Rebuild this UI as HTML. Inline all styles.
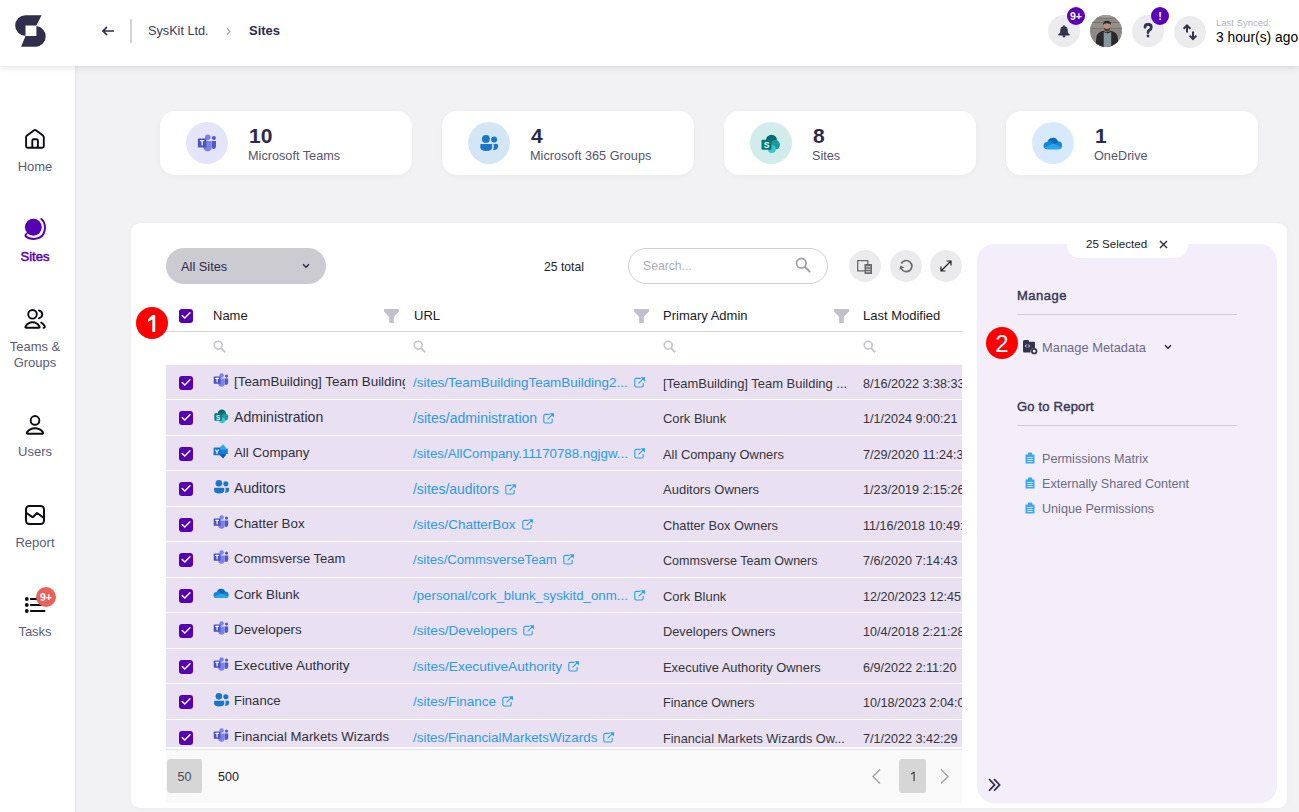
<!DOCTYPE html>
<html><head><meta charset="utf-8">
<style>
*{box-sizing:border-box;margin:0;padding:0}
html,body{width:1299px;height:812px;overflow:hidden}
body{background:#f2f2f5;font-family:"Liberation Sans",sans-serif;position:relative;color:#2b2a4a}
.abs{position:absolute}
#hdr{position:absolute;left:0;top:0;width:1299px;height:66px;background:#fff;box-shadow:0 1px 7px rgba(0,0,0,.13);z-index:5}
#side{position:absolute;left:0;top:66px;width:75px;height:746px;background:#fff;box-shadow:1px 0 2px rgba(0,0,0,.06);z-index:4}
.nav{position:absolute;left:0;width:70px;text-align:center;font-size:13px;color:#5b5b78;line-height:16px}
.nav svg{position:absolute;left:25px}
.card{position:absolute;top:111px;width:252px;height:64px;background:#fff;border-radius:15px;box-shadow:0 1px 6px rgba(0,0,0,.035)}
.card .ic{position:absolute;left:26px;top:11px;width:42px;height:42px;border-radius:50%}
.card .num{position:absolute;left:89px;top:14px;font-size:21px;font-weight:bold;color:#2b2a4a;line-height:22px}
.card .lbl{position:absolute;left:88px;top:37px;font-size:12.7px;color:#55556d;line-height:16px}
#panel{position:absolute;left:131px;top:223px;width:1156px;height:585px;background:#fff;border-radius:9px;box-shadow:0 0 5px rgba(0,0,0,.035)}
.cb{position:absolute;width:14px;height:14px;background:#5700b3;border-radius:3px}
.cb svg{position:absolute;left:0;top:0}
.row{position:absolute;left:166px;width:796px;height:34.5px;background:#e9e1f1}
.row .t{position:absolute;white-space:nowrap;overflow:hidden;line-height:16px}
.nm{left:68px;font-size:13.4px;color:#2f2f3f;top:9px}
.ur{left:247px;font-size:13.6px;color:#2d9ae6;top:10px}
.pa{left:497px;font-size:12.6px;color:#35353c;top:11px}
.lm{left:697px;font-size:12.6px;color:#35353c;top:11px;width:99px}
.hd{position:absolute;top:308px;font-size:13px;color:#222;line-height:16px}
.flt{position:absolute;top:309px}
.sic{position:absolute;top:340px}
.rp{position:absolute;left:1042px;font-size:12.6px;color:#6b6b85;line-height:18px}
</style></head>
<body>
<div id="hdr">
  <!-- logo -->
  <svg class="abs" style="left:15px;top:15px" width="33" height="33" viewBox="0 0 33 33">
    <path d="M10.5 0.2 H26.6 L21.4 10.5 H10.5 V20.9 A10.35 10.35 0 0 1 10.5 0.2 Z" fill="#302e4d"/>
    <path d="M21.4 11.1 A10.35 10.35 0 0 1 21.4 31.7 H6.1 L10.5 21.1 H21.4 Z" fill="#302e4d"/>
  </svg>
  <svg class="abs" style="left:101px;top:25px" width="14" height="12" viewBox="0 0 14 12"><path d="M13 6 H2 M6 2 L2 6 L6 10" stroke="#2b2a4a" stroke-width="1.7" fill="none"/></svg>
  <div class="abs" style="left:130px;top:19px;width:2px;height:24px;background:#d3d3db"></div>
  <div class="abs" style="left:148px;top:23px;font-size:12.7px;line-height:16px;color:#3a3a55">SysKit Ltd.</div>
  <svg class="abs" style="left:225px;top:27px" width="7" height="9" viewBox="0 0 7 9"><path d="M2 1.2 L5 4.5 L2 7.8" stroke="#a8a8b4" stroke-width="1.2" fill="none"/></svg>
  <div class="abs" style="left:249px;top:23px;font-size:13px;line-height:16px;font-weight:bold;color:#2b2a4a">Sites</div>

  <!-- right icons -->
  <div class="abs" style="left:1048px;top:15px;width:32px;height:32px;border-radius:50%;background:#ececef"></div>
  <svg class="abs" style="left:1058px;top:25px" width="12" height="13" viewBox="0 0 12 13"><path d="M6 0.3 Q6.9 0.3 6.9 1.2 Q9.6 2 9.8 5 V7.4 L11.7 9.6 Q12 10.4 11.2 10.4 H0.8 Q0 10.4 0.3 9.6 L2.2 7.4 V5 Q2.4 2 5.1 1.2 Q5.1 0.3 6 0.3 Z" fill="#33324f"/><circle cx="6" cy="11" r="1.4" fill="#33324f"/></svg>
  <div class="abs" style="left:1067px;top:7px;width:18px;height:18px;border-radius:50%;background:#5b00b5;color:#fff;font-size:10.5px;font-weight:bold;text-align:center;line-height:18px">9+</div>
  <div class="abs" style="left:1090px;top:15px;width:32px;height:32px;border-radius:50%;overflow:hidden"><svg width="32" height="32" viewBox="0 0 32 32"><g>
    <rect width="32" height="32" fill="#8e8984"/>
    <rect y="0" width="32" height="3" fill="#a29d97"/>
    <path d="M0 3.2 H32 M0 7.5 H32 M0 13.3 H32" stroke="#75706b" stroke-width="0.9"/>
    <rect y="8" width="32" height="5" fill="#96918c" opacity="0.6"/>
    <path d="M5.5 32 L6.5 21 Q8 17 13.5 15.8 L16.5 17.5 L20.5 15.8 Q26.5 17 27.5 21 L29 32 Z" fill="#29292c"/>
    <path d="M13.7 17 L17.4 18.5 L21.2 17 V32 H13.7 Z" fill="#8796a0"/>
    <rect x="13.6" y="8.2" width="7" height="8.4" rx="2.6" fill="#b39484"/>
    <path d="M13.6 12.6 Q14 16.8 17.1 16.8 Q20.2 16.8 20.6 12.6 Q19 14 17.1 14 Q15.2 14 13.6 12.6 Z" fill="#4e3f38"/>
    <path d="M13 10 Q12.8 6 17 5.8 Q21.3 6 21.1 10 Q20 8 17 8.2 Q14 8 13 10 Z" fill="#2a2523"/>
  </g></svg></div>
  <div class="abs" style="left:1132px;top:15px;width:32px;height:32px;border-radius:50%;background:#ececef"></div>
  <svg class="abs" style="left:1143px;top:23px" width="10" height="15" viewBox="0 0 10 15"><path d="M2 4.3 Q2 1.3 5 1.3 Q8.3 1.3 8.3 4.2 Q8.3 6 6.5 7 Q5 7.8 5 9.5" stroke="#33324f" stroke-width="2.8" fill="none" stroke-linecap="round"/><circle cx="5" cy="13" r="1.4" fill="#33324f"/></svg>
  <div class="abs" style="left:1151px;top:7px;width:18px;height:18px;border-radius:50%;background:#5b00b5;color:#fff;font-size:11px;font-weight:bold;text-align:center;line-height:18px">!</div>
  <div class="abs" style="left:1174px;top:16px;width:32px;height:32px;border-radius:50%;background:#ececef"></div>
  <svg class="abs" style="left:1180px;top:22px" width="20" height="20" viewBox="0 0 20 20"><path d="M7 4 V10.5 M3.6 6.8 L7 3.4 L10.4 6.8 M13 9.5 V16.5 M9.6 13.6 L13 17 L16.4 13.6" stroke="#33324f" stroke-width="2" fill="none"/></svg>
  <div class="abs" style="left:1216px;top:17px;font-size:9.5px;line-height:12px;color:#b4b4c0">Last Synced:</div>
  <div class="abs" style="left:1216px;top:30px;font-size:13.8px;line-height:16px;color:#000">3 hour(s) ago</div>
</div>

<div id="side"></div>
<!-- nav -->
<svg class="abs" style="left:24px;top:128px;z-index:6" width="22" height="22" viewBox="0 0 22 22"><path d="M2.1 9.3 Q2.1 8.3 3 7.6 L9.8 2.4 Q11 1.5 12.2 2.4 L19 7.6 Q19.8 8.3 19.8 9.3 V18.3 Q19.8 19.8 18.3 19.8 H3.6 Q2.1 19.8 2.1 18.3 Z M8.3 19.8 V12.7 Q8.3 11.2 9.8 11.2 H12.4 Q13.9 11.2 13.9 12.7 V19.8" stroke="#0d0d12" stroke-width="1.9" fill="none" stroke-linejoin="round"/></svg>
<div class="nav" style="top:159px;z-index:6">Home</div>
<svg class="abs" style="left:23px;top:217px;z-index:6" width="24" height="24" viewBox="0 0 24 24"><circle cx="10.35" cy="10.25" r="8.45" fill="#5500b3"/><path d="M18.3 2 Q22 5 22 10.8 Q21.5 21.8 10.8 22 Q5.5 22 2.6 19.3 Q1.9 18.3 3.7 16.6" stroke="#5500b3" stroke-width="1.9" fill="none" stroke-linecap="round" stroke-linejoin="round"/></svg>
<div class="nav" style="top:249px;z-index:6;color:#5500b3;font-size:13px;-webkit-text-stroke:0.5px #5500b3">Sites</div>
<svg class="abs" style="left:23px;top:308px;z-index:6" width="24" height="23" viewBox="0 0 24 23"><circle cx="9.5" cy="6.3" r="4.3" stroke="#0d0d12" stroke-width="1.9" fill="none"/><path d="M3.4 19.8 Q1.8 19.8 2.6 18.4 Q5 14.3 9.5 14.3 Q14 14.3 16.4 18.4 Q17.2 19.8 15.6 19.8 Z" stroke="#0d0d12" stroke-width="1.9" fill="none" stroke-linejoin="round"/><path d="M15.8 2.4 Q19.3 3.5 19.3 6.3 Q19.3 9.2 15.8 10.3 M18.2 14.6 Q21 16.2 21.8 18.4 Q22.1 19.8 20.6 19.9" stroke="#0d0d12" stroke-width="1.9" fill="none" stroke-linecap="round"/></svg>
<div class="nav" style="top:339px;z-index:6">Teams &amp;<br>Groups</div>
<svg class="abs" style="left:24px;top:414px;z-index:6" width="22" height="22" viewBox="0 0 22 22"><circle cx="11" cy="6.4" r="4.35" stroke="#0d0d12" stroke-width="1.9" fill="none"/><path d="M3.9 19.8 Q2.2 19.8 3 18.4 Q5.8 14.3 11 14.3 Q16.2 14.3 19 18.4 Q19.8 19.8 18.1 19.8 Z" stroke="#0d0d12" stroke-width="1.9" fill="none" stroke-linejoin="round"/></svg>
<div class="nav" style="top:444px;z-index:6">Users</div>
<svg class="abs" style="left:24px;top:504px;z-index:6" width="22" height="22" viewBox="0 0 22 22"><rect x="2" y="2" width="18" height="18" rx="3.5" stroke="#0d0d12" stroke-width="2" fill="none"/><path d="M2.5 9 L8.8 13.3 L13 9 L19.5 13.6" stroke="#0d0d12" stroke-width="2" fill="none" stroke-linejoin="round"/></svg>
<div class="nav" style="top:535px;z-index:6">Report</div>
<svg class="abs" style="left:24px;top:596px;z-index:6" width="22" height="18" viewBox="0 0 22 18"><circle cx="2.8" cy="3" r="1.9" fill="#0d0d12"/><circle cx="2.8" cy="9" r="1.9" fill="#0d0d12"/><circle cx="2.8" cy="15" r="1.9" fill="#0d0d12"/><path d="M6.8 3 H20.5 M6.8 9 H20.5 M6.8 15 H20.5" stroke="#0d0d12" stroke-width="1.9" stroke-linecap="round"/></svg>
<div class="abs" style="left:36px;top:587px;width:20px;height:20px;border-radius:50%;background:#e9625a;color:#fff;font-size:10.5px;font-weight:bold;text-align:center;line-height:20px;z-index:7">9+</div>
<div class="nav" style="top:624px;z-index:6">Tasks</div>

<!-- cards -->
<div class="card" style="left:160px">
  <div class="ic" style="background:#e4e4fa"></div>
  <svg class="abs" style="left:37px;top:23px" width="20" height="18" viewBox="0 0 20 18"><circle cx="10.8" cy="3.2" r="2.8" fill="#7b83eb"/><circle cx="16.9" cy="3.9" r="2" fill="#5059c9"/><path d="M14.8 7 H19 V12 Q19 14.9 16.5 14.9 Q14.8 14.9 14.8 13 Z" fill="#5059c9"/><path d="M6.4 7 H14.8 V12.5 Q14.8 17.2 10.6 17.2 Q6.4 17.2 6.4 12.5 Z" fill="#7b83eb"/><rect x="0.9" y="4.4" width="8.5" height="9.1" rx="0.8" fill="#4b53bc"/><path d="M3 6.6 H7.3 M5.15 6.6 V11.6" stroke="#fff" stroke-width="1.2"/></svg>
  <div class="num">10</div>
  <div class="lbl">Microsoft Teams</div>
</div>
<div class="card" style="left:442px">
  <div class="ic" style="background:#d4e6f4"></div>
  <svg class="abs" style="left:37px;top:24px" width="20" height="18" viewBox="0 0 20 18"><circle cx="6.9" cy="3.9" r="3.9" fill="#1b77c5"/><circle cx="15.1" cy="4.5" r="3" fill="#1b77c5"/><path d="M14 9.1 H18 Q19 9.1 19 10.1 V11.5 Q19 14.9 14.9 14.9 Q14.3 14.9 13.8 14.8 Q14.8 13.5 14.8 12 V10 Q14.8 9.4 14 9.1 Z" fill="#1b77c5"/><path d="M2.3 9.1 H12.2 Q13.2 9.1 13.2 10.1 V12.3 Q13.2 15.9 7.3 15.9 Q1.3 15.9 1.3 12.3 V10.1 Q1.3 9.1 2.3 9.1 Z" fill="#1b77c5"/></svg>
  <div class="num">4</div>
  <div class="lbl">Microsoft 365 Groups</div>
</div>
<div class="card" style="left:724px">
  <div class="ic" style="background:#d2ecec"></div>
  <svg class="abs" style="left:37px;top:23px" width="20" height="20" viewBox="0 0 20 20"><circle cx="10.5" cy="6.2" r="5.5" fill="#036c70"/><circle cx="14.2" cy="10.8" r="4.8" fill="#1a9ba1"/><circle cx="10.8" cy="15" r="4" fill="#37c6d0"/><rect x="0.5" y="5.8" width="10" height="10" rx="1" fill="#03787c"/><text x="5.5" y="14" font-family="Liberation Sans" font-size="8.5" font-weight="bold" fill="#fff" text-anchor="middle">S</text></svg>
  <div class="num">8</div>
  <div class="lbl">Sites</div>
</div>
<div class="card" style="left:1006px">
  <div class="ic" style="background:#d6eafb"></div>
  <svg class="abs" style="left:37px;top:26px" width="20" height="13" viewBox="0 0 20 13"><path d="M4.5 12.2 Q0.6 12.2 0.6 8.7 Q0.6 5.2 4.3 5 Q5.8 0.8 10 0.8 Q13.3 0.8 14.8 4.3 Q19 4.4 19 8.3 Q19 12.2 15.5 12.2 Z" fill="#1683da"/><path d="M5.6 3.4 Q7.2 0.8 10 0.8 Q13.3 0.8 14.8 4.3 Q14.5 5.8 13 6.3 L10.3 7.3 Q8 4.5 5.6 3.4 Z" fill="#0a69bd"/><path d="M1.3 10.4 L10.3 6.6 L18.7 10.2 Q18.1 12.2 15.5 12.2 H4.5 Q2.1 12.2 1.3 10.4 Z" fill="#2aa5e9"/></svg>
  <div class="num">1</div>
  <div class="lbl">OneDrive</div>
</div>

<div id="panel"></div>

<!-- toolbar -->
<div class="abs" style="left:166px;top:248px;width:160px;height:36px;border-radius:18px;background:#cbcbd1"></div>
<div class="abs" style="left:181px;top:259px;font-size:12.8px;line-height:16px;color:#2b2a4a">All Sites</div>
<svg class="abs" style="left:302px;top:263px" width="8" height="6" viewBox="0 0 8 6"><path d="M1 1.2 L4 4.2 L7 1.2" stroke="#2b2a4a" stroke-width="1.5" fill="none"/></svg>
<div class="abs" style="left:544px;top:259px;font-size:12.2px;line-height:16px;color:#222">25 total</div>
<div class="abs" style="left:628px;top:248px;width:200px;height:36px;border-radius:18px;border:1px solid #cfcfd6;background:#fff"></div>
<div class="abs" style="left:643px;top:258px;font-size:12.2px;line-height:17px;color:#acacb4">Search...</div>
<svg class="abs" style="left:795px;top:257px" width="16" height="16" viewBox="0 0 16 16"><circle cx="6.3" cy="6.3" r="4.8" stroke="#a2a2aa" stroke-width="1.8" fill="none"/><path d="M9.8 9.8 L14.5 14.5" stroke="#a2a2aa" stroke-width="2" stroke-linecap="round"/></svg>
<div class="abs" style="left:849px;top:250px;width:32px;height:32px;border-radius:50%;background:#ebebed"></div>
<svg class="abs" style="left:857px;top:260px" width="17" height="16" viewBox="0 0 17 16"><path d="M0.7 0.7 H10.8 V10.8 H0.7 Z" stroke="#6b6b6b" stroke-width="1.3" fill="none"/><rect x="7.5" y="4" width="7.5" height="10" fill="#6b6b6b"/><path d="M9 6.8 H13.5 M9 9.3 H13.5 M9 11.8 H13.5" stroke="#ebebed" stroke-width="0.9"/></svg>
<div class="abs" style="left:890px;top:250px;width:32px;height:32px;border-radius:50%;background:#ebebed"></div>
<svg class="abs" style="left:898px;top:258px" width="16" height="16" viewBox="0 0 16 16"><path d="M3.2 10.5 A5.6 5.6 0 1 0 3.3 5.5" stroke="#6b6b6b" stroke-width="1.7" fill="none"/><path d="M1.2 11.8 L2.6 7.6 L6.4 9.6 Z" fill="#6b6b6b"/></svg>
<div class="abs" style="left:930px;top:250px;width:32px;height:32px;border-radius:50%;background:#ebebed"></div>
<svg class="abs" style="left:938px;top:258px" width="16" height="16" viewBox="0 0 16 16"><path d="M3 13 L13 3 M8.5 3 H13 V7.5 M3 8.5 V13 H7.5" stroke="#222" stroke-width="1.2" fill="none"/></svg>

<!-- header -->
<svg class="abs" style="left:136px;top:307px;z-index:3" width="32" height="32" viewBox="0 0 32 32"><circle cx="16" cy="16" r="16" fill="#ff0000"/><path d="M16.4 8 H19.2 V25 H16.3 V12.2 L12 15.1 V12.2 Z" fill="#fff"/></svg>
<div class="cb" style="left:179px;top:309px"><svg width="14" height="14" viewBox="0 0 14 14"><path d="M3.2 6.4 L5.8 8.9 L11 3.7" stroke="#fff" stroke-width="1.4" fill="none" stroke-linecap="round"/></svg></div>
<div class="hd" style="left:213px">Name</div>
<div class="hd" style="left:414px">URL</div>
<div class="hd" style="left:663px">Primary Admin</div>
<div class="hd" style="left:863px">Last Modified</div>
<svg class="flt" style="left:384px" width="15" height="14" viewBox="0 0 15 14"><path d="M0 0 H15 V2.5 L9.8 8 V14 H5.2 V8 L0 2.5 Z" fill="#c1c0cb"/></svg><svg class="flt" style="left:634px" width="15" height="14" viewBox="0 0 15 14"><path d="M0 0 H15 V2.5 L9.8 8 V14 H5.2 V8 L0 2.5 Z" fill="#c1c0cb"/></svg><svg class="flt" style="left:834px" width="15" height="14" viewBox="0 0 15 14"><path d="M0 0 H15 V2.5 L9.8 8 V14 H5.2 V8 L0 2.5 Z" fill="#c1c0cb"/></svg>
<div class="abs" style="left:166px;top:331px;width:796px;height:1px;background:#d7d7de"></div>
<svg class="sic" style="left:213px" width="13.5" height="13.5" viewBox="0 0 13 13"><circle cx="5" cy="5" r="3.8" stroke="#c5c5cb" stroke-width="1.6" fill="none"/><path d="M7.8 7.8 L11.8 11.8" stroke="#c5c5cb" stroke-width="1.8"/></svg><svg class="sic" style="left:413px" width="13.5" height="13.5" viewBox="0 0 13 13"><circle cx="5" cy="5" r="3.8" stroke="#c5c5cb" stroke-width="1.6" fill="none"/><path d="M7.8 7.8 L11.8 11.8" stroke="#c5c5cb" stroke-width="1.8"/></svg><svg class="sic" style="left:663px" width="13.5" height="13.5" viewBox="0 0 13 13"><circle cx="5" cy="5" r="3.8" stroke="#c5c5cb" stroke-width="1.6" fill="none"/><path d="M7.8 7.8 L11.8 11.8" stroke="#c5c5cb" stroke-width="1.8"/></svg><svg class="sic" style="left:863px" width="13.5" height="13.5" viewBox="0 0 13 13"><circle cx="5" cy="5" r="3.8" stroke="#c5c5cb" stroke-width="1.6" fill="none"/><path d="M7.8 7.8 L11.8 11.8" stroke="#c5c5cb" stroke-width="1.8"/></svg>
<div class="row" style="top:364.5px"><div class="cb" style="left:13px;top:11px"><svg width="14" height="14" viewBox="0 0 14 14"><path d="M3.2 6.4 L5.8 8.9 L11 3.7" stroke="#fff" stroke-width="1.4" fill="none" stroke-linecap="round"/></svg></div><svg class="abs" style="left:47px;top:8px" width="16" height="14.4" viewBox="0 0 20 18"><circle cx="10.8" cy="3.2" r="2.8" fill="#7b83eb"/><circle cx="16.9" cy="3.9" r="2" fill="#5059c9"/><path d="M14.8 7 H19 V12 Q19 14.9 16.5 14.9 Q14.8 14.9 14.8 13 Z" fill="#5059c9"/><path d="M6.4 7 H14.8 V12.5 Q14.8 17.2 10.6 17.2 Q6.4 17.2 6.4 12.5 Z" fill="#7b83eb"/><rect x="0.9" y="4.4" width="8.5" height="9.1" rx="0.8" fill="#4b53bc"/><path d="M3 6.6 H7.3 M5.15 6.6 V11.6" stroke="#fff" stroke-width="1.5"/></svg><div class="t nm" style="width:171px">[TeamBuilding] Team Building</div><div class="t ur" style="font-size:13.41px">/sites/TeamBuildingTeamBuilding2...<svg style="display:inline-block;vertical-align:-1px;margin-left:6px" width="12" height="11" viewBox="0 0 12 11"><path d="M6.5 1.4 H2.2 Q0.8 1.4 0.8 2.8 V8.6 Q0.8 10 2.2 10 H7.8 Q9.2 10 9.2 8.6 V6" stroke="#2aa1ec" stroke-width="1.1" fill="none"/><path d="M4.6 6.3 L9.6 1.3" stroke="#2aa1ec" stroke-width="1.2"/><path d="M6.6 0.2 H11 V4.6 Z" fill="#2aa1ec"/></svg></div><div class="t pa" style="font-size:12.96px">[TeamBuilding] Team Building ...</div><div class="t lm">8/16/2022 3:38:33</div></div>
<div class="row" style="top:400.0px"><div class="cb" style="left:13px;top:11px"><svg width="14" height="14" viewBox="0 0 14 14"><path d="M3.2 6.4 L5.8 8.9 L11 3.7" stroke="#fff" stroke-width="1.4" fill="none" stroke-linecap="round"/></svg></div><svg class="abs" style="left:48px;top:8.5px" width="15" height="15" viewBox="0 0 20 20"><circle cx="10.5" cy="6.2" r="5.5" fill="#036c70"/><circle cx="14.2" cy="10.8" r="4.8" fill="#1a9ba1"/><circle cx="10.8" cy="15" r="4" fill="#37c6d0"/><rect x="0.5" y="5.8" width="10" height="10" rx="1" fill="#03787c"/><text x="5.5" y="14" font-family="Liberation Sans" font-size="8.5" font-weight="bold" fill="#fff" text-anchor="middle">S</text></svg><div class="t nm" style="width:171px;font-size:14.10px">Administration</div><div class="t ur" style="font-size:14.06px">/sites/administration<svg style="display:inline-block;vertical-align:-1px;margin-left:6px" width="12" height="11" viewBox="0 0 12 11"><path d="M6.5 1.4 H2.2 Q0.8 1.4 0.8 2.8 V8.6 Q0.8 10 2.2 10 H7.8 Q9.2 10 9.2 8.6 V6" stroke="#2aa1ec" stroke-width="1.1" fill="none"/><path d="M4.6 6.3 L9.6 1.3" stroke="#2aa1ec" stroke-width="1.2"/><path d="M6.6 0.2 H11 V4.6 Z" fill="#2aa1ec"/></svg></div><div class="t pa" style="font-size:12.94px">Cork Blunk</div><div class="t lm">1/1/2024 9:00:21</div></div>
<div class="row" style="top:435.5px"><div class="cb" style="left:13px;top:11px"><svg width="14" height="14" viewBox="0 0 14 14"><path d="M3.2 6.4 L5.8 8.9 L11 3.7" stroke="#fff" stroke-width="1.4" fill="none" stroke-linecap="round"/></svg></div><svg class="abs" style="left:47px;top:7px" width="16" height="16" viewBox="0 0 16 16"><path d="M6.8 4.5 L10.1 1.3 L12.8 4.5 V7 H6.8 Z" fill="#35a6ee"/><path d="M6.8 6.5 H12.8 V5.5 H14.8 V11.1 H12.8 V11.5 H6.8 Z" fill="#1580d6"/><path d="M6.8 11 H12.8 V12.3 L10.1 15.5 L6.8 12.3 Z" fill="#0b5cad"/><rect x="0.6" y="4.5" width="6.8" height="7.8" rx="0.5" fill="#1474cf"/><path d="M2.4 6.6 L4 9 L5.6 6.6 M4 9 V11" stroke="#fff" stroke-width="1.1" fill="none"/></svg><div class="t nm" style="width:171px;font-size:13.31px">All Company</div><div class="t ur" style="font-size:13.29px">/sites/AllCompany.11170788.ngjgw...<svg style="display:inline-block;vertical-align:-1px;margin-left:6px" width="12" height="11" viewBox="0 0 12 11"><path d="M6.5 1.4 H2.2 Q0.8 1.4 0.8 2.8 V8.6 Q0.8 10 2.2 10 H7.8 Q9.2 10 9.2 8.6 V6" stroke="#2aa1ec" stroke-width="1.1" fill="none"/><path d="M4.6 6.3 L9.6 1.3" stroke="#2aa1ec" stroke-width="1.2"/><path d="M6.6 0.2 H11 V4.6 Z" fill="#2aa1ec"/></svg></div><div class="t pa" style="font-size:12.88px">All Company Owners</div><div class="t lm">7/29/2020 11:24:30</div></div>
<div class="row" style="top:471.0px"><div class="cb" style="left:13px;top:11px"><svg width="14" height="14" viewBox="0 0 14 14"><path d="M3.2 6.4 L5.8 8.9 L11 3.7" stroke="#fff" stroke-width="1.4" fill="none" stroke-linecap="round"/></svg></div><svg class="abs" style="left:47px;top:9px" width="17" height="15.3" viewBox="0 0 20 18"><circle cx="6.9" cy="3.9" r="3.9" fill="#1b77c5"/><circle cx="15.1" cy="4.5" r="3" fill="#1b77c5"/><path d="M14 9.1 H18 Q19 9.1 19 10.1 V11.5 Q19 14.9 14.9 14.9 Q14.3 14.9 13.8 14.8 Q14.8 13.5 14.8 12 V10 Q14.8 9.4 14 9.1 Z" fill="#1b77c5"/><path d="M2.3 9.1 H12.2 Q13.2 9.1 13.2 10.1 V12.3 Q13.2 15.9 7.3 15.9 Q1.3 15.9 1.3 12.3 V10.1 Q1.3 9.1 2.3 9.1 Z" fill="#1b77c5"/></svg><div class="t nm" style="width:171px;font-size:14.08px">Auditors</div><div class="t ur" style="font-size:13.93px">/sites/auditors<svg style="display:inline-block;vertical-align:-1px;margin-left:6px" width="12" height="11" viewBox="0 0 12 11"><path d="M6.5 1.4 H2.2 Q0.8 1.4 0.8 2.8 V8.6 Q0.8 10 2.2 10 H7.8 Q9.2 10 9.2 8.6 V6" stroke="#2aa1ec" stroke-width="1.1" fill="none"/><path d="M4.6 6.3 L9.6 1.3" stroke="#2aa1ec" stroke-width="1.2"/><path d="M6.6 0.2 H11 V4.6 Z" fill="#2aa1ec"/></svg></div><div class="t pa" style="font-size:13.01px">Auditors Owners</div><div class="t lm">1/23/2019 2:15:26</div></div>
<div class="row" style="top:506.5px"><div class="cb" style="left:13px;top:11px"><svg width="14" height="14" viewBox="0 0 14 14"><path d="M3.2 6.4 L5.8 8.9 L11 3.7" stroke="#fff" stroke-width="1.4" fill="none" stroke-linecap="round"/></svg></div><svg class="abs" style="left:47px;top:8px" width="16" height="14.4" viewBox="0 0 20 18"><circle cx="10.8" cy="3.2" r="2.8" fill="#7b83eb"/><circle cx="16.9" cy="3.9" r="2" fill="#5059c9"/><path d="M14.8 7 H19 V12 Q19 14.9 16.5 14.9 Q14.8 14.9 14.8 13 Z" fill="#5059c9"/><path d="M6.4 7 H14.8 V12.5 Q14.8 17.2 10.6 17.2 Q6.4 17.2 6.4 12.5 Z" fill="#7b83eb"/><rect x="0.9" y="4.4" width="8.5" height="9.1" rx="0.8" fill="#4b53bc"/><path d="M3 6.6 H7.3 M5.15 6.6 V11.6" stroke="#fff" stroke-width="1.5"/></svg><div class="t nm" style="width:171px;font-size:13.38px">Chatter Box</div><div class="t ur" style="font-size:13.47px">/sites/ChatterBox<svg style="display:inline-block;vertical-align:-1px;margin-left:6px" width="12" height="11" viewBox="0 0 12 11"><path d="M6.5 1.4 H2.2 Q0.8 1.4 0.8 2.8 V8.6 Q0.8 10 2.2 10 H7.8 Q9.2 10 9.2 8.6 V6" stroke="#2aa1ec" stroke-width="1.1" fill="none"/><path d="M4.6 6.3 L9.6 1.3" stroke="#2aa1ec" stroke-width="1.2"/><path d="M6.6 0.2 H11 V4.6 Z" fill="#2aa1ec"/></svg></div><div class="t pa" style="font-size:12.77px">Chatter Box Owners</div><div class="t lm">11/16/2018 10:49:00</div></div>
<div class="row" style="top:542.0px"><div class="cb" style="left:13px;top:11px"><svg width="14" height="14" viewBox="0 0 14 14"><path d="M3.2 6.4 L5.8 8.9 L11 3.7" stroke="#fff" stroke-width="1.4" fill="none" stroke-linecap="round"/></svg></div><svg class="abs" style="left:47px;top:8px" width="16" height="14.4" viewBox="0 0 20 18"><circle cx="10.8" cy="3.2" r="2.8" fill="#7b83eb"/><circle cx="16.9" cy="3.9" r="2" fill="#5059c9"/><path d="M14.8 7 H19 V12 Q19 14.9 16.5 14.9 Q14.8 14.9 14.8 13 Z" fill="#5059c9"/><path d="M6.4 7 H14.8 V12.5 Q14.8 17.2 10.6 17.2 Q6.4 17.2 6.4 12.5 Z" fill="#7b83eb"/><rect x="0.9" y="4.4" width="8.5" height="9.1" rx="0.8" fill="#4b53bc"/><path d="M3 6.6 H7.3 M5.15 6.6 V11.6" stroke="#fff" stroke-width="1.5"/></svg><div class="t nm" style="width:171px;font-size:12.95px">Commsverse Team</div><div class="t ur" style="font-size:13.14px">/sites/CommsverseTeam<svg style="display:inline-block;vertical-align:-1px;margin-left:6px" width="12" height="11" viewBox="0 0 12 11"><path d="M6.5 1.4 H2.2 Q0.8 1.4 0.8 2.8 V8.6 Q0.8 10 2.2 10 H7.8 Q9.2 10 9.2 8.6 V6" stroke="#2aa1ec" stroke-width="1.1" fill="none"/><path d="M4.6 6.3 L9.6 1.3" stroke="#2aa1ec" stroke-width="1.2"/><path d="M6.6 0.2 H11 V4.6 Z" fill="#2aa1ec"/></svg></div><div class="t pa" style="font-size:12.56px">Commsverse Team Owners</div><div class="t lm">7/6/2020 7:14:43</div></div>
<div class="row" style="top:577.5px"><div class="cb" style="left:13px;top:11px"><svg width="14" height="14" viewBox="0 0 14 14"><path d="M3.2 6.4 L5.8 8.9 L11 3.7" stroke="#fff" stroke-width="1.4" fill="none" stroke-linecap="round"/></svg></div><svg class="abs" style="left:47px;top:10.5px" width="16.5" height="10.7" viewBox="0 0 20 13"><path d="M4.5 12.2 Q0.6 12.2 0.6 8.7 Q0.6 5.2 4.3 5 Q5.8 0.8 10 0.8 Q13.3 0.8 14.8 4.3 Q19 4.4 19 8.3 Q19 12.2 15.5 12.2 Z" fill="#1683da"/><path d="M5.6 3.4 Q7.2 0.8 10 0.8 Q13.3 0.8 14.8 4.3 Q14.5 5.8 13 6.3 L10.3 7.3 Q8 4.5 5.6 3.4 Z" fill="#0a69bd"/><path d="M1.3 10.4 L10.3 6.6 L18.7 10.2 Q18.1 12.2 15.5 12.2 H4.5 Q2.1 12.2 1.3 10.4 Z" fill="#2aa5e9"/></svg><div class="t nm" style="width:171px;font-size:13.40px">Cork Blunk</div><div class="t ur" style="font-size:13.29px">/personal/cork_blunk_syskitd_onm...<svg style="display:inline-block;vertical-align:-1px;margin-left:6px" width="12" height="11" viewBox="0 0 12 11"><path d="M6.5 1.4 H2.2 Q0.8 1.4 0.8 2.8 V8.6 Q0.8 10 2.2 10 H7.8 Q9.2 10 9.2 8.6 V6" stroke="#2aa1ec" stroke-width="1.1" fill="none"/><path d="M4.6 6.3 L9.6 1.3" stroke="#2aa1ec" stroke-width="1.2"/><path d="M6.6 0.2 H11 V4.6 Z" fill="#2aa1ec"/></svg></div><div class="t pa" style="font-size:12.96px">Cork Blunk</div><div class="t lm">12/20/2023 12:45:00</div></div>
<div class="row" style="top:613.0px"><div class="cb" style="left:13px;top:11px"><svg width="14" height="14" viewBox="0 0 14 14"><path d="M3.2 6.4 L5.8 8.9 L11 3.7" stroke="#fff" stroke-width="1.4" fill="none" stroke-linecap="round"/></svg></div><svg class="abs" style="left:47px;top:8px" width="16" height="14.4" viewBox="0 0 20 18"><circle cx="10.8" cy="3.2" r="2.8" fill="#7b83eb"/><circle cx="16.9" cy="3.9" r="2" fill="#5059c9"/><path d="M14.8 7 H19 V12 Q19 14.9 16.5 14.9 Q14.8 14.9 14.8 13 Z" fill="#5059c9"/><path d="M6.4 7 H14.8 V12.5 Q14.8 17.2 10.6 17.2 Q6.4 17.2 6.4 12.5 Z" fill="#7b83eb"/><rect x="0.9" y="4.4" width="8.5" height="9.1" rx="0.8" fill="#4b53bc"/><path d="M3 6.6 H7.3 M5.15 6.6 V11.6" stroke="#fff" stroke-width="1.5"/></svg><div class="t nm" style="width:171px;font-size:13.40px">Developers</div><div class="t ur" style="font-size:13.60px">/sites/Developers<svg style="display:inline-block;vertical-align:-1px;margin-left:6px" width="12" height="11" viewBox="0 0 12 11"><path d="M6.5 1.4 H2.2 Q0.8 1.4 0.8 2.8 V8.6 Q0.8 10 2.2 10 H7.8 Q9.2 10 9.2 8.6 V6" stroke="#2aa1ec" stroke-width="1.1" fill="none"/><path d="M4.6 6.3 L9.6 1.3" stroke="#2aa1ec" stroke-width="1.2"/><path d="M6.6 0.2 H11 V4.6 Z" fill="#2aa1ec"/></svg></div><div class="t pa" style="font-size:12.81px">Developers Owners</div><div class="t lm">10/4/2018 2:21:28</div></div>
<div class="row" style="top:648.5px"><div class="cb" style="left:13px;top:11px"><svg width="14" height="14" viewBox="0 0 14 14"><path d="M3.2 6.4 L5.8 8.9 L11 3.7" stroke="#fff" stroke-width="1.4" fill="none" stroke-linecap="round"/></svg></div><svg class="abs" style="left:47px;top:8px" width="16" height="14.4" viewBox="0 0 20 18"><circle cx="10.8" cy="3.2" r="2.8" fill="#7b83eb"/><circle cx="16.9" cy="3.9" r="2" fill="#5059c9"/><path d="M14.8 7 H19 V12 Q19 14.9 16.5 14.9 Q14.8 14.9 14.8 13 Z" fill="#5059c9"/><path d="M6.4 7 H14.8 V12.5 Q14.8 17.2 10.6 17.2 Q6.4 17.2 6.4 12.5 Z" fill="#7b83eb"/><rect x="0.9" y="4.4" width="8.5" height="9.1" rx="0.8" fill="#4b53bc"/><path d="M3 6.6 H7.3 M5.15 6.6 V11.6" stroke="#fff" stroke-width="1.5"/></svg><div class="t nm" style="width:171px;font-size:13.58px">Executive Authority</div><div class="t ur" style="font-size:13.69px">/sites/ExecutiveAuthority<svg style="display:inline-block;vertical-align:-1px;margin-left:6px" width="12" height="11" viewBox="0 0 12 11"><path d="M6.5 1.4 H2.2 Q0.8 1.4 0.8 2.8 V8.6 Q0.8 10 2.2 10 H7.8 Q9.2 10 9.2 8.6 V6" stroke="#2aa1ec" stroke-width="1.1" fill="none"/><path d="M4.6 6.3 L9.6 1.3" stroke="#2aa1ec" stroke-width="1.2"/><path d="M6.6 0.2 H11 V4.6 Z" fill="#2aa1ec"/></svg></div><div class="t pa" style="font-size:12.90px">Executive Authority Owners</div><div class="t lm">6/9/2022 2:11:20</div></div>
<div class="row" style="top:684.0px"><div class="cb" style="left:13px;top:11px"><svg width="14" height="14" viewBox="0 0 14 14"><path d="M3.2 6.4 L5.8 8.9 L11 3.7" stroke="#fff" stroke-width="1.4" fill="none" stroke-linecap="round"/></svg></div><svg class="abs" style="left:47px;top:9px" width="17" height="15.3" viewBox="0 0 20 18"><circle cx="6.9" cy="3.9" r="3.9" fill="#1b77c5"/><circle cx="15.1" cy="4.5" r="3" fill="#1b77c5"/><path d="M14 9.1 H18 Q19 9.1 19 10.1 V11.5 Q19 14.9 14.9 14.9 Q14.3 14.9 13.8 14.8 Q14.8 13.5 14.8 12 V10 Q14.8 9.4 14 9.1 Z" fill="#1b77c5"/><path d="M2.3 9.1 H12.2 Q13.2 9.1 13.2 10.1 V12.3 Q13.2 15.9 7.3 15.9 Q1.3 15.9 1.3 12.3 V10.1 Q1.3 9.1 2.3 9.1 Z" fill="#1b77c5"/></svg><div class="t nm" style="width:171px;font-size:13.05px">Finance</div><div class="t ur" style="font-size:13.44px">/sites/Finance<svg style="display:inline-block;vertical-align:-1px;margin-left:6px" width="12" height="11" viewBox="0 0 12 11"><path d="M6.5 1.4 H2.2 Q0.8 1.4 0.8 2.8 V8.6 Q0.8 10 2.2 10 H7.8 Q9.2 10 9.2 8.6 V6" stroke="#2aa1ec" stroke-width="1.1" fill="none"/><path d="M4.6 6.3 L9.6 1.3" stroke="#2aa1ec" stroke-width="1.2"/><path d="M6.6 0.2 H11 V4.6 Z" fill="#2aa1ec"/></svg></div><div class="t pa" style="font-size:12.59px">Finance Owners</div><div class="t lm">10/18/2023 2:04:00</div></div>
<div class="row" style="top:719.5px"><div class="cb" style="left:13px;top:11px"><svg width="14" height="14" viewBox="0 0 14 14"><path d="M3.2 6.4 L5.8 8.9 L11 3.7" stroke="#fff" stroke-width="1.4" fill="none" stroke-linecap="round"/></svg></div><svg class="abs" style="left:47px;top:8px" width="16" height="14.4" viewBox="0 0 20 18"><circle cx="10.8" cy="3.2" r="2.8" fill="#7b83eb"/><circle cx="16.9" cy="3.9" r="2" fill="#5059c9"/><path d="M14.8 7 H19 V12 Q19 14.9 16.5 14.9 Q14.8 14.9 14.8 13 Z" fill="#5059c9"/><path d="M6.4 7 H14.8 V12.5 Q14.8 17.2 10.6 17.2 Q6.4 17.2 6.4 12.5 Z" fill="#7b83eb"/><rect x="0.9" y="4.4" width="8.5" height="9.1" rx="0.8" fill="#4b53bc"/><path d="M3 6.6 H7.3 M5.15 6.6 V11.6" stroke="#fff" stroke-width="1.5"/></svg><div class="t nm" style="width:171px;font-size:13.23px">Financial Markets Wizards</div><div class="t ur" style="font-size:13.38px">/sites/FinancialMarketsWizards<svg style="display:inline-block;vertical-align:-1px;margin-left:6px" width="12" height="11" viewBox="0 0 12 11"><path d="M6.5 1.4 H2.2 Q0.8 1.4 0.8 2.8 V8.6 Q0.8 10 2.2 10 H7.8 Q9.2 10 9.2 8.6 V6" stroke="#2aa1ec" stroke-width="1.1" fill="none"/><path d="M4.6 6.3 L9.6 1.3" stroke="#2aa1ec" stroke-width="1.2"/><path d="M6.6 0.2 H11 V4.6 Z" fill="#2aa1ec"/></svg></div><div class="t pa" style="font-size:12.74px">Financial Markets Wizards Ow...</div><div class="t lm">7/1/2022 3:42:29</div></div>
<!-- footer -->
<div class="abs" style="left:166px;top:747px;width:796px;height:56px;background:#f9f9f9;border-top:1px solid #fff"><div class="abs" style="left:0;top:1px;width:796px;height:1px;background:#e4e4e8"></div></div>
<div class="abs" style="left:167px;top:759px;width:35px;height:34px;border-radius:3px;background:#d6d6d6;text-align:center;font-size:12.5px;line-height:36px;color:#4a4a58">50</div>
<div class="abs" style="left:218px;top:759px;font-size:12.5px;line-height:36px;color:#222">500</div>
<svg class="abs" style="left:871px;top:768px" width="11" height="17" viewBox="0 0 11 17"><path d="M9 1.5 L2 8.5 L9 15.5" stroke="#a0a0a0" stroke-width="1.4" fill="none"/></svg>
<div class="abs" style="left:899px;top:759px;width:27px;height:34px;border-radius:3px;background:#d6d6d6"></div><svg class="abs" style="left:909px;top:771px" width="8" height="11" viewBox="0 0 8 11"><path d="M4.5 0.8 H5.6 V10.3 H4.5 V2.3 L2.1 3.7 V2.6 Z" fill="#333"/></svg>
<svg class="abs" style="left:939px;top:768px" width="11" height="17" viewBox="0 0 11 17"><path d="M2 1.5 L9 8.5 L2 15.5" stroke="#a0a0a0" stroke-width="1.4" fill="none"/></svg>

<!-- right panel -->
<div class="abs" style="left:977px;top:244px;width:300px;height:558.5px;border-radius:17px;background:#f4eefa"></div>
<div class="abs" style="left:1067px;top:230px;width:121px;height:28px;border-radius:0 0 13px 13px;background:#fff"></div>
<div class="abs" style="left:1086px;top:236px;font-size:11.6px;line-height:16px;color:#1a1a24">25 Selected</div>
<svg class="abs" style="left:1158.5px;top:239.5px" width="9" height="9" viewBox="0 0 9 9"><path d="M1 1 L8 8 M8 1 L1 8" stroke="#2a2940" stroke-width="1.4"/></svg>
<div class="abs" style="left:1017px;top:288px;font-size:13px;line-height:16px;color:#3a3a55;-webkit-text-stroke:0.45px #3a3a55;letter-spacing:0.5px">Manage</div>
<div class="abs" style="left:1017px;top:314px;width:220px;height:1px;background:#cfcfd8"></div>
<div class="abs" style="left:986px;top:327px;width:32px;height:32px;border-radius:50%;background:#ff0000;color:#fff;font-size:24px;text-align:center;line-height:33px">2</div>
<svg class="abs" style="left:1022px;top:339px" width="16" height="16" viewBox="0 0 16 16"><path d="M1 2.5 Q1 1 2.5 1 H5.8 Q7 1 7 2.2 V2.8 H12 Q13 2.8 13 4 V9 A3.8 3.8 0 0 0 8.6 13.5 H2.5 Q1 13.5 1 12 Z" fill="#33324f"/><path d="M4.6 5.6 L3.4 7 L4.6 8.4 M6.4 5.6 L7.6 7 L6.4 8.4" stroke="#fff" stroke-width="0.9" fill="none"/><circle cx="12.2" cy="12.2" r="2.3" stroke="#33324f" stroke-width="1.7" fill="none"/></svg>
<div class="abs" style="left:1042px;top:340px;font-size:12.9px;line-height:16px;color:#6b6b85">Manage Metadata</div>
<svg class="abs" style="left:1164px;top:344px" width="8" height="6" viewBox="0 0 8 6"><path d="M1 1.2 L4 4.2 L7 1.2" stroke="#2b2a4a" stroke-width="1.5" fill="none"/></svg>
<div class="abs" style="left:1017px;top:399px;font-size:13px;line-height:16px;color:#3a3a55;-webkit-text-stroke:0.45px #3a3a55;letter-spacing:0.2px">Go to Report</div>
<div class="abs" style="left:1017px;top:425px;width:220px;height:1px;background:#cfcfd8"></div>
<svg class="abs" style="left:1025px;top:452px" width="10" height="12" viewBox="0 0 10 12"><path d="M0.5 2.5 H2.8 V1.6 Q2.8 0.5 3.8 0.5 H6.2 Q7.2 0.5 7.2 1.6 V2.5 H9.5 V11.5 H0.5 Z" fill="#3ea8f4"/><path d="M2.3 5.5 H7.7 M2.3 7.5 H7.7 M2.3 9.5 H7.7" stroke="#d8ecfb" stroke-width="0.9"/></svg><svg class="abs" style="left:1025px;top:477px" width="10" height="12" viewBox="0 0 10 12"><path d="M0.5 2.5 H2.8 V1.6 Q2.8 0.5 3.8 0.5 H6.2 Q7.2 0.5 7.2 1.6 V2.5 H9.5 V11.5 H0.5 Z" fill="#3ea8f4"/><path d="M2.3 5.5 H7.7 M2.3 7.5 H7.7 M2.3 9.5 H7.7" stroke="#d8ecfb" stroke-width="0.9"/></svg><svg class="abs" style="left:1025px;top:502px" width="10" height="12" viewBox="0 0 10 12"><path d="M0.5 2.5 H2.8 V1.6 Q2.8 0.5 3.8 0.5 H6.2 Q7.2 0.5 7.2 1.6 V2.5 H9.5 V11.5 H0.5 Z" fill="#3ea8f4"/><path d="M2.3 5.5 H7.7 M2.3 7.5 H7.7 M2.3 9.5 H7.7" stroke="#d8ecfb" stroke-width="0.9"/></svg>
<div class="rp" style="top:450px">Permissions Matrix</div>
<div class="rp" style="top:475px">Externally Shared Content</div>
<div class="rp" style="top:500px">Unique Permissions</div>
<svg class="abs" style="left:988px;top:778px" width="14" height="14" viewBox="0 0 14 14"><path d="M1.6 1.6 L6.6 6.9 L1.6 12.2 M6.6 1.6 L11.6 6.9 L6.6 12.2" stroke="#33324f" stroke-width="1.75" fill="none" stroke-linecap="round"/></svg>

</body></html>
